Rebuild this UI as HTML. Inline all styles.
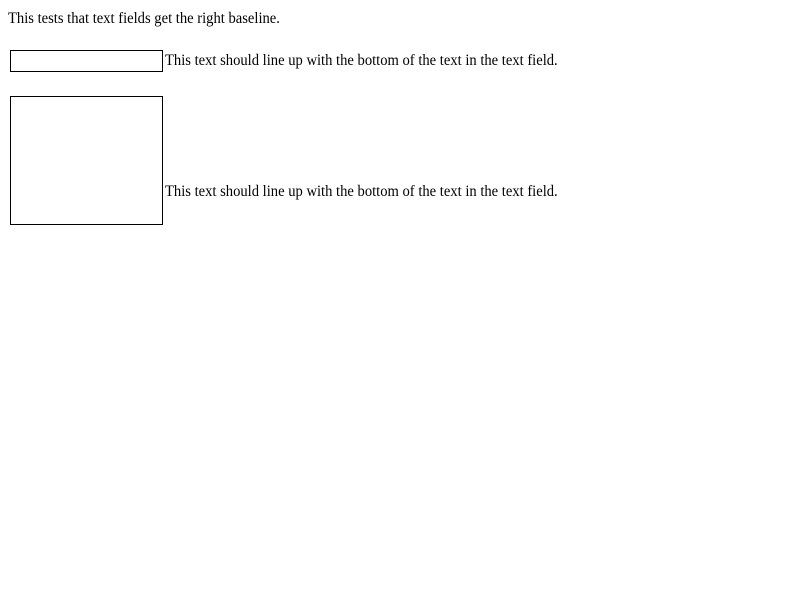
<!DOCTYPE html>
<html><head><style>
body{margin:0;font-family:"Liberation Serif",serif;font-size:16px;color:#000;background:#fff;}
.t{position:absolute;white-space:nowrap;line-height:18px;transform:scaleX(0.912);transform-origin:0 0;}
.b{position:absolute;border:1px solid #000;box-sizing:border-box;}
</style></head><body>
<div class="t" style="left:8px;top:10px">This tests that text fields get the right baseline.</div>
<div class="b" style="left:10px;top:50px;width:153px;height:22px"></div>
<div class="t" style="left:165px;top:52px">This text should line up with the bottom of the text in the text field.</div>
<div class="b" style="left:10px;top:96px;width:153px;height:129px"></div>
<div class="t" style="left:165px;top:183px">This text should line up with the bottom of the text in the text field.</div>
</body></html>
